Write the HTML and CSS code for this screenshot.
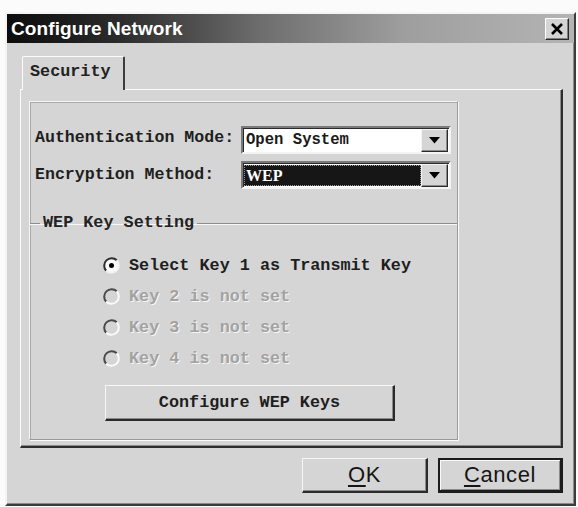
FILE: index.html
```html
<!DOCTYPE html>
<html>
<head>
<meta charset="utf-8">
<link rel="stylesheet" href="styles.css">
</head>
<body>
<div class="dialog">
  <div class="titlebar">
    <span class="title">Configure Network</span>
    <div class="close">
      <svg width="14" height="12" viewBox="0 0 14 12"><path d="M2 1 L12 11 M12 1 L2 11" stroke="#000" stroke-width="2.6" fill="none"/></svg>
    </div>
  </div>
  <div class="content">
    <div class="tabs"><div class="tab">Security</div></div>
    <div class="panel">
      <div class="inner">
        <div class="row">
          <span class="label">Authentication Mode:</span>
          <div class="combo">
            <div class="field">Open System</div>
            <div class="arrow"><svg width="11" height="7" viewBox="0 0 11 7"><path d="M0 0 H11 L5.5 6.5 Z" fill="#000"/></svg></div>
          </div>
        </div>
        <div class="row row2">
          <span class="label">Encryption Method:</span>
          <div class="combo">
            <div class="field selected"><span class="sel">WEP</span></div>
            <div class="arrow"><svg width="11" height="7" viewBox="0 0 11 7"><path d="M0 0 H11 L5.5 6.5 Z" fill="#000"/></svg></div>
          </div>
        </div>
        <fieldset class="group">
          <legend>WEP Key Setting</legend>
          <div class="radios">
            <div class="radio">
              <svg width="19" height="19" viewBox="0 0 19 19"><circle cx="9.5" cy="9.5" r="7.5" fill="#fafafa"/><path d="M4.2 14.8 A7.5 7.5 0 0 1 14.8 4.2" stroke="#2e2e2e" stroke-width="2" fill="none"/><path d="M14.8 4.2 A7.5 7.5 0 0 1 4.2 14.8" stroke="#f2f2f2" stroke-width="2" fill="none"/><circle cx="9.5" cy="9.5" r="2.5" fill="#000"/></svg>
              <span>Select Key 1 as Transmit Key</span>
            </div>
            <div class="radio disabled">
              <svg width="19" height="19" viewBox="0 0 19 19"><path d="M4.2 14.8 A7.5 7.5 0 0 1 14.8 4.2" stroke="#4a4a4a" stroke-width="2" fill="none"/><path d="M14.8 4.2 A7.5 7.5 0 0 1 4.2 14.8" stroke="#fbfbfb" stroke-width="2" fill="none"/></svg>
              <span>Key 2 is not set</span>
            </div>
            <div class="radio disabled">
              <svg width="19" height="19" viewBox="0 0 19 19"><path d="M4.2 14.8 A7.5 7.5 0 0 1 14.8 4.2" stroke="#4a4a4a" stroke-width="2" fill="none"/><path d="M14.8 4.2 A7.5 7.5 0 0 1 4.2 14.8" stroke="#fbfbfb" stroke-width="2" fill="none"/></svg>
              <span>Key 3 is not set</span>
            </div>
            <div class="radio disabled">
              <svg width="19" height="19" viewBox="0 0 19 19"><path d="M4.2 14.8 A7.5 7.5 0 0 1 14.8 4.2" stroke="#4a4a4a" stroke-width="2" fill="none"/><path d="M14.8 4.2 A7.5 7.5 0 0 1 4.2 14.8" stroke="#fbfbfb" stroke-width="2" fill="none"/></svg>
              <span>Key 4 is not set</span>
            </div>
          </div>
          <div class="btn keys">Configure WEP Keys</div>
        </fieldset>
      </div>
    </div>
    <div class="buttons">
      <div class="btn action"><u>O</u>K</div>
      <div class="btn action default"><u>C</u>ancel</div>
    </div>
  </div>
</div>
</body>
</html>
```
FILE: styles.css
```css
html, body {
  margin: 0;
  padding: 0;
  background: #fbfbfb;
}
body {
  width: 578px;
  height: 507px;
  overflow: hidden;
  font-family: "Liberation Mono", monospace;
}
.dialog {
  margin: 12px 0 0 5px;
  width: 571px;
  height: 494px;
  box-sizing: border-box;
  background: #d5d5d5;
  border: 2px solid;
  border-color: #f4f4f4 #3c3c3c #3c3c3c #f4f4f4;
  box-shadow: inset -1px -1px 0 #8a8a8a;
}
.titlebar {
  height: 29px;
  display: flex;
  align-items: center;
  justify-content: space-between;
  padding: 0 5px 0 4px;
  background: linear-gradient(to right, #0c0c0c 0%, #2c2c2c 20%, #6e6e6e 45%, #9e9e9e 70%, #b4b4b4 100%);
}
.title {
  color: #fff;
  font-family: "Liberation Sans", Arial, sans-serif;
  font-weight: bold;
  font-size: 19px;
  letter-spacing: 0.1px;
}
.close {
  width: 24px;
  height: 22px;
  box-sizing: border-box;
  background: #d5d5d5;
  border: 1px solid;
  border-color: #fff #2a2a2a #2a2a2a #fff;
  box-shadow: inset -1px -1px 0 #808080;
  display: flex;
  align-items: center;
  justify-content: center;
}
.content {
  padding: 13px 11px 0 13px;
}
.tabs {
  display: flex;
  padding-left: 2px;
  position: relative;
  z-index: 1;
  margin-bottom: -1px;
}
.tab {
  width: 103px;
  height: 34px;
  box-sizing: border-box;
  border: 1px solid;
  border-color: #fbfbfb #3c3c3c transparent #fbfbfb;
  border-right-width: 2px;
  border-bottom: 0;
  background: #d5d5d5;
  font-size: 16.8px;
  font-weight: bold;
  color: #222;
  padding: 5px 0 0 7px;
  border-radius: 2px 2px 0 0;
}
.panel {
  width: 543px;
  height: 359px;
  box-sizing: border-box;
  border: 1px solid;
  border-color: #fbfbfb #2e2e2e #2e2e2e #fbfbfb;
  border-right-width: 2px;
  border-bottom-width: 2px;
  box-shadow: inset -1px -1px 0 #8c8c8c;
  padding: 11px 0 0 8px;
}
.inner {
  width: 429px;
  height: 339px;
  box-sizing: border-box;
  border: 1px solid;
  border-color: #f6f6f6 #9a9a9a #9a9a9a #f6f6f6;
  box-shadow: 1px 1px 0 #fbfbfb, inset 1px 1px 0 #a8a8a8;
  padding-top: 24px;
}
.row {
  display: flex;
  align-items: center;
  padding-left: 5px;
  height: 28px;
}
.row2 {
  margin-top: 7px;
}
.label {
  width: 206px;
  font-size: 16.6px;
  font-weight: bold;
  color: #1e1e1e;
  white-space: nowrap;
  margin-top: -6px;
}
.row2 .label {
  margin-top: -2px;
}
.combo {
  width: 210px;
  height: 28px;
  box-sizing: border-box;
  border: 2px solid;
  border-color: #7a7a7a #f4f4f4 #f4f4f4 #7a7a7a;
  box-shadow: inset 1px 1px 0 #2a2a2a;
  background: #fff;
  display: flex;
  padding: 1px 1px 0 1px;
}
.field {
  flex: 1;
  font-size: 15.6px;
  font-weight: bold;
  color: #1a1a1a;
  padding-left: 2px;
  line-height: 23px;
}
.field.selected {
  background: #161616;
  outline: 1px dotted #9a9a9a;
  outline-offset: -1px;
  margin: 1px 0 1px 0;
  line-height: 21px;
}
.sel {
  color: #fff;
  font-family: "Liberation Serif", serif;
  font-size: 16px;
}
.arrow {
  width: 27px;
  height: 23px;
  box-sizing: border-box;
  background: #d5d5d5;
  border: 1px solid;
  border-color: #f4f4f4 #2a2a2a #2a2a2a #f4f4f4;
  box-shadow: inset -1px -1px 0 #8a8a8a;
  display: flex;
  align-items: center;
  justify-content: center;
}
.group {
  margin: 24px 0 0 0;
  padding: 0;
  border: 0;
  border-top: 1px solid #8e8e8e;
  box-shadow: inset 0 1px 0 #f8f8f8;
  min-width: 0;
}
.group legend {
  margin-left: 10px;
  padding: 0 3px;
  font-size: 16.8px;
  font-weight: bold;
  color: #232323;
  line-height: 20px;
}
.radios {
  padding: 17px 0 0 72px;
}
.radio {
  height: 31px;
  display: flex;
  align-items: center;
  gap: 8px;
  font-size: 16.8px;
  font-weight: bold;
  color: #1e1e1e;
}
.radio.disabled {
  color: #a2a2a2;
  text-shadow: 1px 1px 0 #f6f6f6;
}
.btn {
  box-sizing: border-box;
  background: #d5d5d5;
  border: 1px solid;
  border-color: #f6f6f6 #2a2a2a #2a2a2a #f6f6f6;
  border-right-width: 2px;
  border-bottom-width: 2px;
  box-shadow: inset -1px -1px 0 #8a8a8a;
  display: flex;
  align-items: center;
  justify-content: center;
  color: #1e1e1e;
}
.keys {
  margin: 11px 0 0 75px;
  width: 290px;
  height: 36px;
  font-size: 16.8px;
  font-weight: bold;
}
.buttons {
  display: flex;
  justify-content: flex-end;
  gap: 10px;
  margin-top: 10px;
  width: 543px;
}
.action {
  width: 126px;
  height: 35px;
  font-family: "Liberation Sans", Arial, sans-serif;
  font-size: 22px;
  letter-spacing: 0.6px;
  color: #151515;
}
.action u {
  text-underline-offset: 3px;
  text-decoration-thickness: 2px;
}
.default {
  width: 125px;
  border: 2px solid #1c1c1c;
  border-right-width: 3px;
  border-bottom-width: 3px;
  box-shadow: inset 1px 1px 0 #fafafa, inset -1px -1px 0 #8a8a8a;
}
```
